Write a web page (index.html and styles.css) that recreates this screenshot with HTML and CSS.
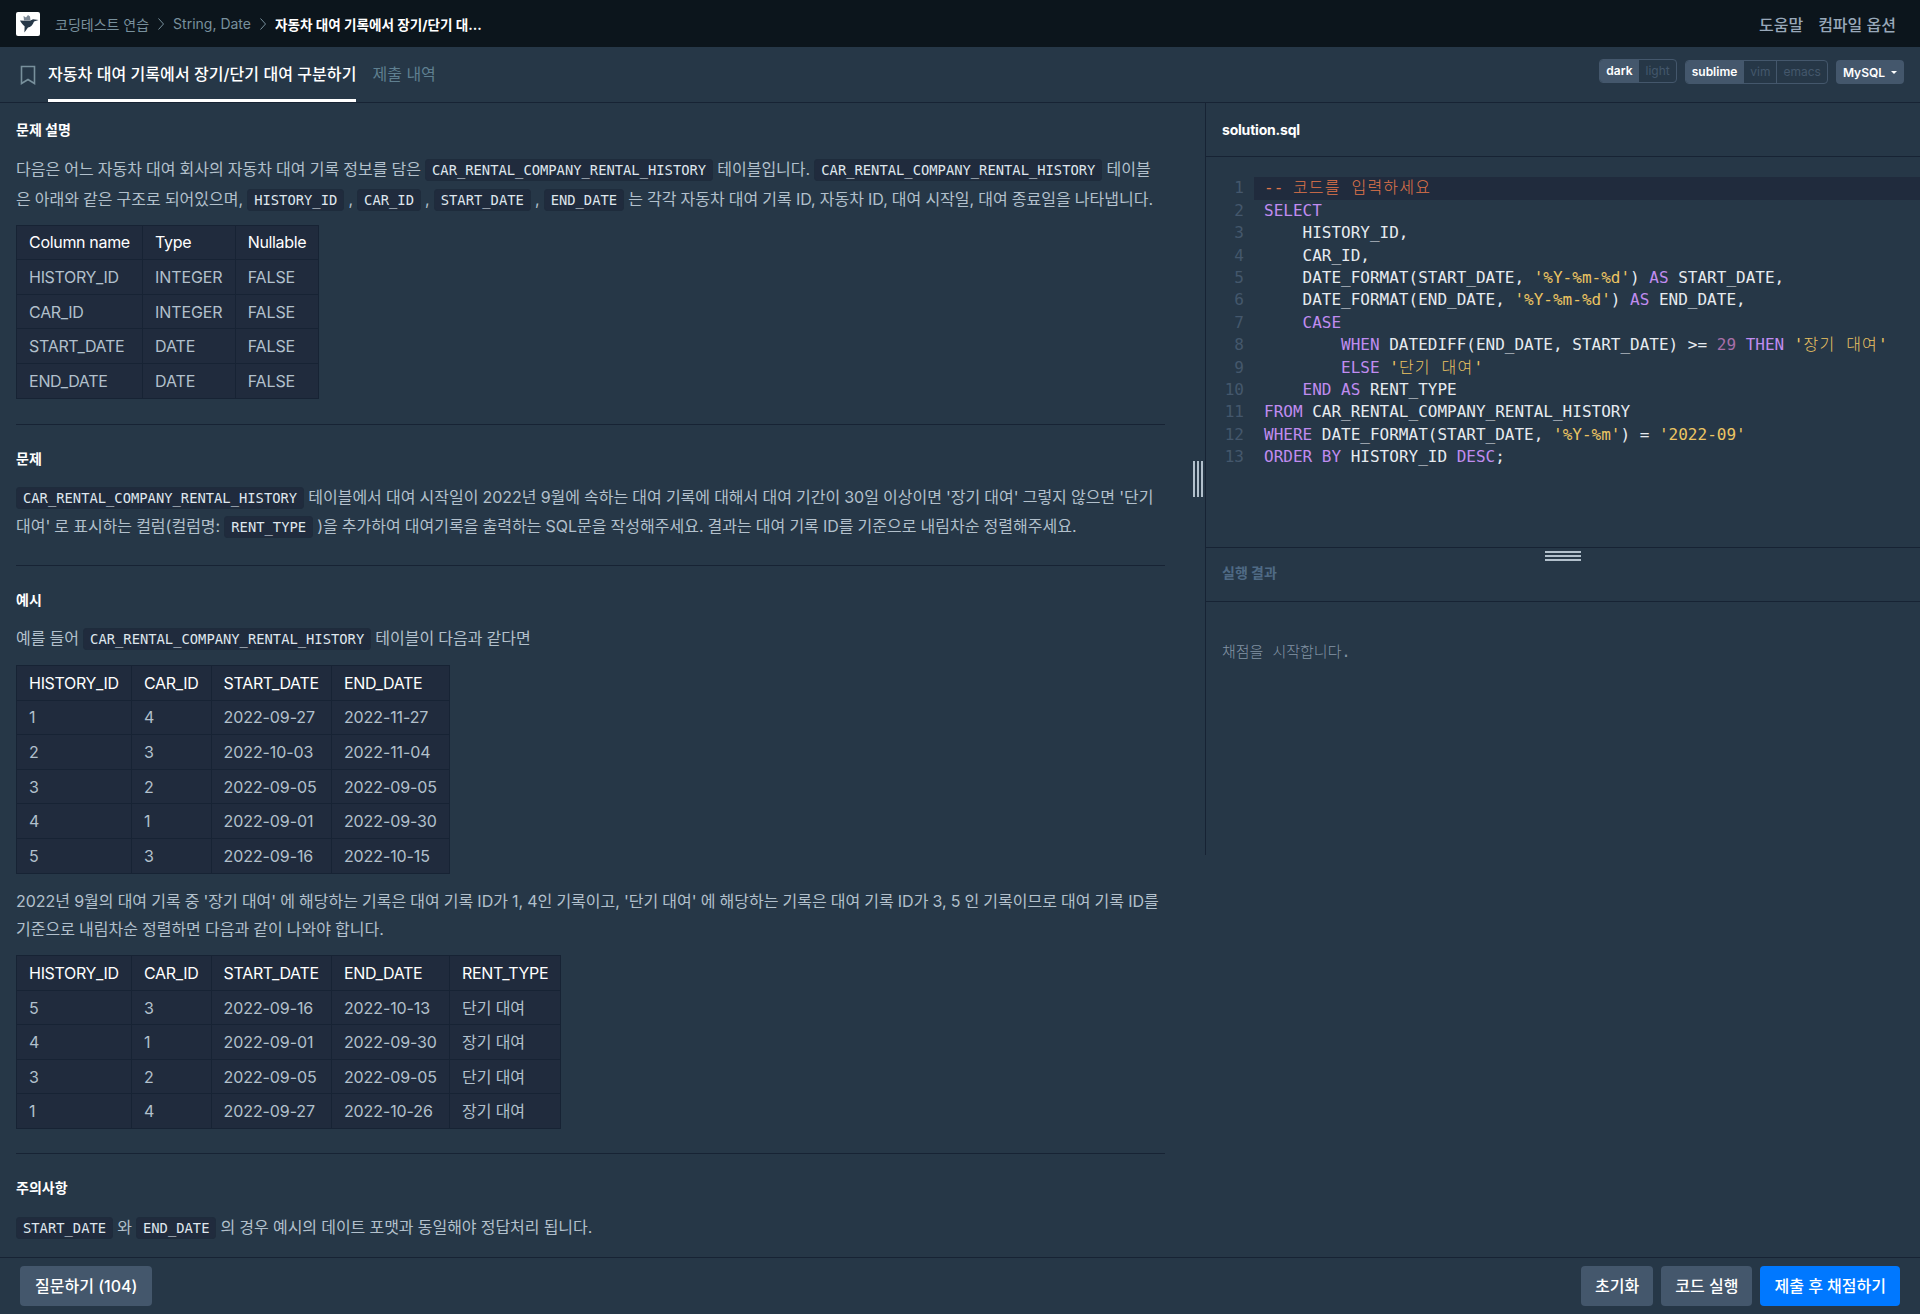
FILE: index.html
```html
<!DOCTYPE html>
<html lang="ko">
<head>
  <meta charset="UTF-8">
  <title>코딩테스트 연습 - 자동차 대여 기록에서 장기/단기 대여 구분하기</title>
  <meta name="viewport" content="width=device-width, initial-scale=1.0">
  <link rel="stylesheet" href="styles.css">
</head>
<body>
  <!-- 상단 내비게이션 -->
  <header class="topbar">
    <a class="logo">
      <svg width="24" height="24" viewBox="0 0 24 24">
        <rect width="24" height="24" rx="2" fill="#fff"/>
        <path d="M8 8.5 7.5 4 10 5.5 12 3 14 4.5 14.5 8.5Z" fill="#7b8794"/>
        <path d="M4 8.5 9 8.8 14 8.8 17 7.3 22.5 8 18 9.5C17 13 14.5 15 12 15.6L8.4 20.5 8.6 14.2C6.6 12.6 5 10.5 4 8.5Z" fill="#263747"/>
      </svg>
    </a>
    <ol class="breadcrumb">
      <li>코딩테스트 연습</li>
      <li class="chevron"><svg width="6" height="12" viewBox="0 0 6 12"><path d="M.5.5 5.5 6 .5 11.5" fill="none" stroke="#78909c"/></svg></li>
      <li>String, Date</li>
      <li class="chevron"><svg width="6" height="12" viewBox="0 0 6 12"><path d="M.5.5 5.5 6 .5 11.5" fill="none" stroke="#78909c"/></svg></li>
      <li class="current">자동차 대여 기록에서 장기/단기 대...</li>
    </ol>
    <nav class="top-links">
      <a>도움말</a>
      <a>컴파일 옵션</a>
    </nav>
  </header>

  <!-- 탭과 에디터 설정 -->
  <div class="tabbar">
    <svg class="bookmark" width="16" height="20" viewBox="0 0 16 20"><path d="M1.5 1.5H14.5V18.5L8 14.5 1.5 18.5Z" fill="none" stroke="#78909c" stroke-width="1.6"/></svg>
    <a class="tab active">자동차 대여 기록에서 장기/단기 대여 구분하기</a>
    <a class="tab">제출 내역</a>
    <div class="toolbar">
      <div class="btn-group raised">
        <span class="opt on">dark</span><span class="opt">light</span>
      </div>
      <div class="btn-group">
        <span class="opt on">sublime</span><span class="opt">vim</span><span class="opt">emacs</span>
      </div>
      <div class="lang-select">MySQL<i class="caret"></i></div>
    </div>
  </div>

  <main class="workspace">
    <!-- 문제 설명 -->
    <section class="guide">
      <h6 class="first">문제 설명</h6>
      <p class="intro">다음은 어느 자동차 대여 회사의 자동차 대여 기록 정보를 담은 <code>CAR_RENTAL_COMPANY_RENTAL_HISTORY</code> 테이블입니다. <code>CAR_RENTAL_COMPANY_RENTAL_HISTORY</code> 테이블은 아래와 같은 구조로 되어있으며, <code>HISTORY_ID</code> , <code>CAR_ID</code> , <code>START_DATE</code> , <code>END_DATE</code> 는 각각 자동차 대여 기록 ID, 자동차 ID, 대여 시작일, 대여 종료일을 나타냅니다.</p>
      <table class="schema">
        <thead>
          <tr><th>Column name</th><th>Type</th><th>Nullable</th></tr>
        </thead>
        <tbody>
          <tr><td>HISTORY_ID</td><td>INTEGER</td><td>FALSE</td></tr>
          <tr><td>CAR_ID</td><td>INTEGER</td><td>FALSE</td></tr>
          <tr><td>START_DATE</td><td>DATE</td><td>FALSE</td></tr>
          <tr><td>END_DATE</td><td>DATE</td><td>FALSE</td></tr>
        </tbody>
      </table>
      <hr>

      <h6>문제</h6>
      <p><code>CAR_RENTAL_COMPANY_RENTAL_HISTORY</code> 테이블에서 대여 시작일이 2022년 9월에 속하는 대여 기록에 대해서 대여 기간이 30일 이상이면 '장기 대여' 그렇지 않으면 '단기 대여' 로 표시하는 컬럼(컬럼명: <code>RENT_TYPE</code> )을 추가하여 대여기록을 출력하는 SQL문을 작성해주세요. 결과는 대여 기록 ID를 기준으로 내림차순 정렬해주세요.</p>
      <hr>

      <h6>예시</h6>
      <p>예를 들어 <code>CAR_RENTAL_COMPANY_RENTAL_HISTORY</code> 테이블이 다음과 같다면</p>
      <table>
        <thead>
          <tr><th>HISTORY_ID</th><th>CAR_ID</th><th>START_DATE</th><th>END_DATE</th></tr>
        </thead>
        <tbody>
          <tr><td>1</td><td>4</td><td>2022-09-27</td><td>2022-11-27</td></tr>
          <tr><td>2</td><td>3</td><td>2022-10-03</td><td>2022-11-04</td></tr>
          <tr><td>3</td><td>2</td><td>2022-09-05</td><td>2022-09-05</td></tr>
          <tr><td>4</td><td>1</td><td>2022-09-01</td><td>2022-09-30</td></tr>
          <tr><td>5</td><td>3</td><td>2022-09-16</td><td>2022-10-15</td></tr>
        </tbody>
      </table>
      <p class="after-table">2022년 9월의 대여 기록 중 '장기 대여' 에 해당하는 기록은 대여 기록 ID가 1, 4인 기록이고, '단기 대여' 에 해당하는 기록은 대여 기록 ID가 3, 5 인 기록이므로 대여 기록 ID를 기준으로 내림차순 정렬하면 다음과 같이 나와야 합니다.</p>
      <table>
        <thead>
          <tr><th>HISTORY_ID</th><th>CAR_ID</th><th>START_DATE</th><th>END_DATE</th><th>RENT_TYPE</th></tr>
        </thead>
        <tbody>
          <tr><td>5</td><td>3</td><td>2022-09-16</td><td>2022-10-13</td><td>단기 대여</td></tr>
          <tr><td>4</td><td>1</td><td>2022-09-01</td><td>2022-09-30</td><td>장기 대여</td></tr>
          <tr><td>3</td><td>2</td><td>2022-09-05</td><td>2022-09-05</td><td>단기 대여</td></tr>
          <tr><td>1</td><td>4</td><td>2022-09-27</td><td>2022-10-26</td><td>장기 대여</td></tr>
        </tbody>
      </table>
      <hr>

      <h6 class="first">주의사항</h6>
      <p><code>START_DATE</code> 와 <code>END_DATE</code> 의 경우 예시의 데이트 포맷과 동일해야 정답처리 됩니다.</p>
    </section>

    <!-- 코드 에디터와 실행 결과 -->
    <section class="panes">
      <div class="grip-v"></div>
      <div class="file-name">solution.sql</div>
      <div class="editor">
        <div class="line current"><span class="ln">1</span><span class="src"><span class="cm">-- <span class="ko">코드를 입력하세요</span></span></span></div>
        <div class="line"><span class="ln">2</span><span class="src"><span class="kw">SELECT</span></span></div>
        <div class="line"><span class="ln">3</span><span class="src">    HISTORY_ID,</span></div>
        <div class="line"><span class="ln">4</span><span class="src">    CAR_ID,</span></div>
        <div class="line"><span class="ln">5</span><span class="src">    DATE_FORMAT(START_DATE, <span class="str">'%Y-%m-%d'</span>) <span class="kw">AS</span> START_DATE,</span></div>
        <div class="line"><span class="ln">6</span><span class="src">    DATE_FORMAT(END_DATE, <span class="str">'%Y-%m-%d'</span>) <span class="kw">AS</span> END_DATE,</span></div>
        <div class="line"><span class="ln">7</span><span class="src">    <span class="kw">CASE</span></span></div>
        <div class="line"><span class="ln">8</span><span class="src">        <span class="kw">WHEN</span> DATEDIFF(END_DATE, START_DATE) &gt;= <span class="num">29</span> <span class="kw">THEN</span> <span class="str">'<span class="ko">장기 대여</span>'</span></span></div>
        <div class="line"><span class="ln">9</span><span class="src">        <span class="kw">ELSE</span> <span class="str">'<span class="ko">단기 대여</span>'</span></span></div>
        <div class="line"><span class="ln">10</span><span class="src">    <span class="kw">END</span> <span class="kw">AS</span> RENT_TYPE</span></div>
        <div class="line"><span class="ln">11</span><span class="src"><span class="kw">FROM</span> CAR_RENTAL_COMPANY_RENTAL_HISTORY</span></div>
        <div class="line"><span class="ln">12</span><span class="src"><span class="kw">WHERE</span> DATE_FORMAT(START_DATE, <span class="str">'%Y-%m'</span>) = <span class="str">'2022-09'</span></span></div>
        <div class="line"><span class="ln">13</span><span class="src"><span class="kw">ORDER</span> <span class="kw">BY</span> HISTORY_ID <span class="kw">DESC</span>;</span></div>
      </div>
      <div class="result-head">
        <div class="grip-h"></div>
        실행 결과
      </div>
      <div class="result-body">채점을 시작합니다.</div>
    </section>
  </main>

  <!-- 하단 버튼 -->
  <footer class="actions">
    <button class="btn ask">질문하기 (104)</button>
    <div class="actions-right">
      <button class="btn">초기화</button>
      <button class="btn">코드 실행</button>
      <button class="btn primary">제출 후 채점하기</button>
    </div>
  </footer>
</body>
</html>
```

FILE: styles.css
```css
/* 기본 */
html, body {
  height: 100%;
}
body {
  margin: 0;
  display: flex;
  flex-direction: column;
  overflow: hidden;
  background: #263747;
  color: #b2c0cc;
  font-family: Inter, "Noto Sans CJK KR", sans-serif;
  font-size: 16px;
}

/* 상단 내비게이션 */
.topbar {
  display: flex;
  align-items: center;
  height: 47px;
  padding: 0 24px 0 16px;
  background: #0c151c;
  font-size: 14px;
}
.logo {
  display: flex;
  margin-right: 15px;
}
.breadcrumb {
  display: flex;
  align-items: center;
  list-style: none;
  margin: 0;
  padding: 0;
  color: #78909c;
}
.breadcrumb .chevron {
  display: flex;
  margin: 0 9px;
}
.breadcrumb .current {
  color: #fff;
  font-size: 13.6px;
  font-weight: 700;
}
.top-links {
  display: flex;
  gap: 15px;
  margin-left: auto;
  font-size: 16px;
  font-weight: 500;
  color: #98a8b9;
}

/* 탭 */
.tabbar {
  display: flex;
  height: 55px;
  padding: 0 16px 0 20px;
  border-bottom: 1px solid #172334;
  box-sizing: content-box;
}
.bookmark {
  margin: 18px 12px 0 0;
}
.tab {
  height: 52px;
  margin-right: 16px;
  line-height: 54px;
  color: #5f7f90;
}
.tab.active {
  border-bottom: 3px solid #fff;
  color: #fff;
  font-weight: 500;
  letter-spacing: 0.06px;
}
.toolbar {
  display: flex;
  align-items: flex-start;
  gap: 8px;
  margin: 13px 0 0 auto;
  font-size: 12px;
  font-weight: 600;
}
.btn-group {
  display: flex;
  height: 24px;
  border: 1px solid #44576c;
  border-radius: 4px;
  box-sizing: border-box;
  overflow: hidden;
}
.btn-group.raised {
  margin-top: -1px;
}
.opt {
  padding: 0 6px;
  line-height: 22px;
  color: #44576c;
  font-weight: 400;
}
.opt + .opt {
  border-left: 1px solid #44576c;
}
.opt.on {
  background: #44576c;
  color: #fff;
  font-weight: 600;
}
.lang-select {
  display: flex;
  align-items: center;
  height: 24px;
  padding: 0 7px;
  border-radius: 4px;
  background: #44576c;
  color: #fff;
}
.caret {
  margin-left: 6px;
  border-top: 3px solid #fff;
  border-left: 3px solid transparent;
  border-right: 3px solid transparent;
}

/* 본문 영역 */
.workspace {
  display: flex;
  flex: 1;
  min-height: 0;
}
.guide {
  width: 1205px;
  padding: 17px 40px 0 16px;
  box-sizing: border-box;
  overflow: hidden;
}
.guide h6 {
  margin: 0 0 13px;
  font-size: 14px;
  line-height: 20px;
  font-weight: 700;
  color: #fff;
}
.guide h6.first {
  margin-bottom: 14px;
}
.guide p {
  margin: 0 0 11px;
  padding-top: 1px;
  line-height: 28.8px;
  word-spacing: -0.4px;
}
.guide p.intro {
  margin-bottom: 10px;
}
.guide p.after-table {
  margin-top: 12px;
}
.guide hr {
  height: 1px;
  margin: 24px 0;
  border: 0;
  background: #172334;
}
.guide p + hr {
  margin-top: 23px;
}
.guide code {
  padding: 2px 6px;
  border: 1px solid #1e2c3c;
  border-radius: 4px;
  background: #202b3d;
  color: #dfe6ed;
  font-family: "DejaVu Sans Mono", "Noto Sans CJK KR", monospace;
  font-size: 13.8px;
}
.guide table {
  border-collapse: collapse;
  background: #202b3d;
}
.guide table.schema {
  margin-bottom: 25px;
}
.guide th, .guide td {
  height: 34.6px;
  padding: 0 12.1px;
  border: 1px solid #172334;
  text-align: left;
  line-height: 1;
  font-weight: 400;
  box-sizing: border-box;
}
.guide td {
  letter-spacing: -0.1px;
}
.guide th {
  color: #fff;
  letter-spacing: -0.33px;
}
.schema td:first-child {
  letter-spacing: -0.33px;
}

/* 에디터 */
.panes {
  position: relative;
  display: flex;
  flex-direction: column;
  width: 715px;
  height: 752px;
  border-left: 1px solid #172334;
  box-sizing: border-box;
}
.file-name {
  height: 53px;
  padding-left: 16px;
  border-bottom: 1px solid #172334;
  line-height: 53px;
  font-size: 14px;
  font-weight: 700;
  letter-spacing: -0.2px;
  color: #fff;
}
.editor {
  height: 391px;
  padding-top: 20.3px;
  border-bottom: 1px solid #172334;
  box-sizing: border-box;
  font-family: "DejaVu Sans Mono", "Noto Sans CJK KR", monospace;
  font-size: 16px;
  line-height: 22.4px;
  color: #e6ebf0;
}
.line {
  display: flex;
}
.ln {
  width: 38px;
  padding-right: 10px;
  text-align: right;
  color: #44576c;
}
.src {
  flex: 1;
  padding-left: 10px;
  white-space: pre;
}
.line.current .src {
  background: #202b3d;
}
.kw { color: #c08cf0; }
.str { color: #ecc462; }
.cm { color: #e0764a; }
.num { color: #a86fa8; }
.ko {
  font-weight: 300;
  letter-spacing: 1.2px;
}

.result-head {
  position: relative;
  height: 53px;
  padding-left: 16px;
  border-bottom: 1px solid #172334;
  line-height: 49px;
  font-size: 14px;
  font-weight: 700;
  color: #4f6a85;
}
.result-body {
  flex: 1;
  padding: 39px 16px 0;
  line-height: 22px;
  font-family: "DejaVu Sans Mono", "Noto Sans CJK KR", monospace;
  font-size: 15px;
  font-weight: 300;
  color: #8394a5;
}

/* 크기 조절 손잡이 */
.grip-v {
  position: absolute;
  left: -13px;
  top: 358px;
  width: 10px;
  height: 36px;
  background: repeating-linear-gradient(to right, #b2c0cc 0 2px, transparent 2px 4px);
}
.grip-h {
  position: absolute;
  left: 339px;
  top: 3px;
  width: 36px;
  height: 10px;
  background: repeating-linear-gradient(#b2c0cc 0 2px, transparent 2px 4px);
}

/* 하단 버튼 */
.actions {
  display: flex;
  justify-content: space-between;
  align-items: center;
  height: 57px;
  padding: 0 20px;
  border-top: 1px solid #172334;
  box-sizing: border-box;
}
.actions-right {
  display: flex;
  gap: 8px;
}
.btn {
  height: 40px;
  padding: 0 14px 2px;
  border: 0;
  border-radius: 4px;
  background: #44576c;
  color: #fff;
  font-family: inherit;
  font-size: 16px;
  font-weight: 500;
}
.btn.ask {
  padding: 0 15px 2px;
}
.btn.primary {
  background: #0078ff;
}
```
